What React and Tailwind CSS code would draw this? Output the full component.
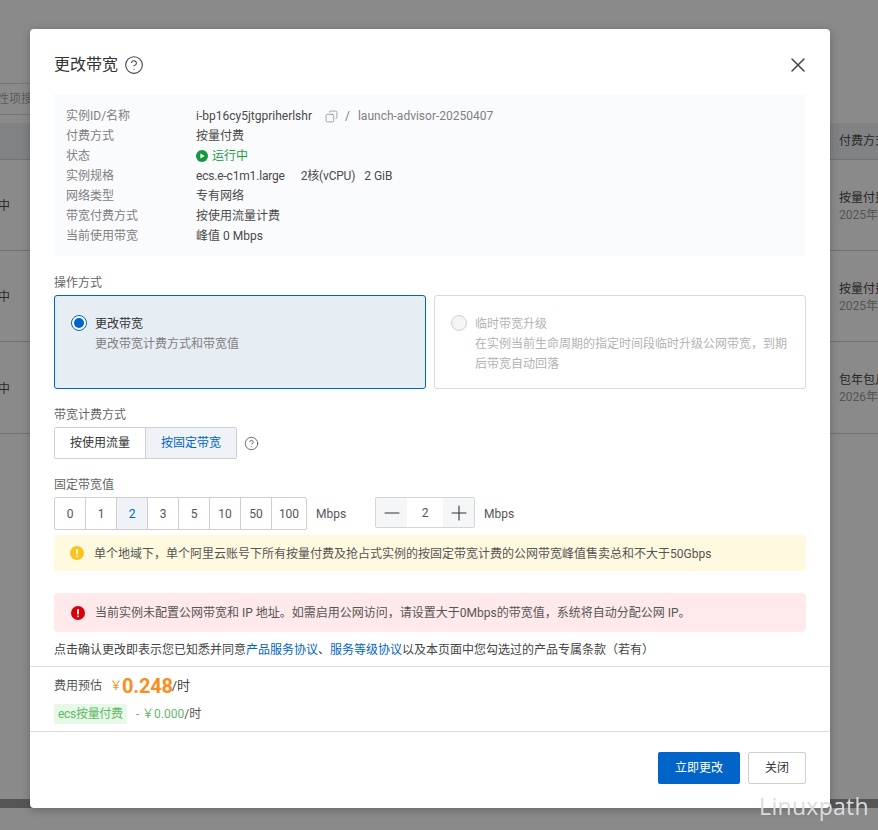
import React from "react";
import { CircleHelp, Copy, X, Minus, Plus } from "lucide-react";

const font = "font-['Roboto','Noto_Sans_CJK_SC',sans-serif]";

function BgRow({ left, right, sub, h }) {
  return (
    <div className={`flex justify-between border-b border-[#727272] ${h}`}>
      <div className="ml-[-2px] flex items-center pt-[2px] text-xs text-[#2a2a2a]">{left}</div>
      <div className="w-[39px] overflow-hidden whitespace-nowrap pt-[30px] text-xs leading-[17px]">
        <div className="text-[#262626]">{right}</div>
        <div className="text-[#555]">{sub}</div>
      </div>
    </div>
  );
}

function Info({ label, children }) {
  return (
    <div className="flex h-5 items-center text-xs">
      <div className="w-[130px] text-[#808080]">{label}</div>
      <div className="flex items-center text-[#4a4a4a]">{children}</div>
    </div>
  );
}

function Alert({ color, h, mt, icon, children, pl }) {
  return (
    <div className={`flex items-center rounded-sm text-xs text-[#555] ${color} ${h} ${mt} ${pl}`}>
      {icon}
      {children}
    </div>
  );
}

export default function App() {
  const vals = ["0", "1", "2", "3", "5", "10", "50", "100"];
  return (
    <div className={`relative h-[830px] w-[878px] overflow-hidden bg-[#8a8a8a] ${font}`}>
      {/* dimmed page behind the dialog */}
      <div className="pt-[83px]">
        <div className="h-[32px] w-[31px] overflow-hidden whitespace-nowrap border-y border-[#757575] text-xs leading-[30px] text-[#5c5c5c]">
          <span className="ml-[-3px]">性项搜</span>
        </div>
        <div className="mt-[8px] flex h-[37px] items-center justify-end border-b border-[#727272] bg-[#808284] text-xs text-[#2a2a2a]">
          <div className="w-[39px] overflow-hidden whitespace-nowrap">付费方式</div>
        </div>
        <BgRow left="中" right="按量付费" sub="2025年" h="h-[91px]" />
        <BgRow left="中" right="按量付费" sub="2025年" h="h-[91px]" />
        <BgRow left="中" right="包年包月" sub="2026年" h="h-[92px]" />
        <div className="mt-[365px] h-[9px] bg-[#555555]" />
      </div>

      {/* dialog */}
      <div className="absolute left-[30px] top-[29px] flex h-[779px] w-[800px] flex-col rounded-[4px] bg-white shadow-[0_2px_8px_rgba(0,0,0,0.25)]">
        <div className="flex h-[65px] items-center justify-between pl-6 pr-6 pt-[7px]">
          <div className="flex items-center">
            <span className="text-base text-[#333]">更改带宽</span>
            <CircleHelp className="ml-[6px] h-5 w-5 text-[#444]" strokeWidth={1.3} />
          </div>
          <X className="mr-[-4px] h-6 w-6 text-[#444]" strokeWidth={1.5} />
        </div>

        <div className="mx-6 h-[162px] bg-[#fafbfd] px-3 pt-3">
          <Info label="实例ID/名称">
            <span>i-bp16cy5jtgpriherlshr</span>
            <Copy className="ml-[13px] h-[13px] w-[13px] scale-x-[-1] text-[#808080]" strokeWidth={1.3} />
            <span className="ml-[7px] text-[#808080]">/</span>
            <span className="ml-[8px] text-[#808080]">launch-advisor-20250407</span>
          </Info>
          <Info label="付费方式">按量付费</Info>
          <Info label="状态">
            <svg viewBox="0 0 12 12" className="mr-[4px] h-3 w-3">
              <circle cx="6" cy="6" r="6" fill="#12973d" />
              <path d="M4.4 3.4 L8.6 6 L4.4 8.6 Z" fill="#fff" />
            </svg>
            <span className="text-[#1f9a4a]">运行中</span>
          </Info>
          <Info label="实例规格">
            <span className="tracking-[-0.18px]">ecs.e-c1m1.large</span>
            <span className="ml-4 tracking-[-0.2px]">2核(vCPU)</span>
            <span className="ml-[9px]">2 GiB</span>
          </Info>
          <Info label="网络类型">专有网络</Info>
          <Info label="带宽付费方式">按使用流量计费</Info>
          <Info label="当前使用带宽">峰值 0 Mbps</Info>
        </div>

        <div className="mx-6 mt-[18px] text-xs leading-[18px] text-[#666]">操作方式</div>
        <div className="mx-6 mt-[3px] flex h-[94px] gap-2">
          <div className="flex w-[372px] rounded-[3px] border border-[#0064c8] bg-[#e6edf3] pl-[16px] pt-[18px]">
            <div className="mt-px flex h-4 w-4 items-center justify-center rounded-full border border-[#0064c8] bg-white">
              <div className="h-[10px] w-[10px] rounded-full bg-[#0064c8]" />
            </div>
            <div className="ml-2 text-xs leading-5">
              <div className="text-[#333]">更改带宽</div>
              <div className="text-[#808080]">更改带宽计费方式和带宽值</div>
            </div>
          </div>
          <div className="flex w-[372px] rounded-[3px] border border-[#d9d9d9] bg-white pl-[16px] pr-[12px] pt-[18px]">
            <div className="mt-px h-4 w-4 shrink-0 rounded-full border border-[#d0d0d0] bg-[#f5f5f5]" />
            <div className="ml-2 text-xs leading-5 text-[#b3b3b3]">
              <div>临时带宽升级</div>
              <div>在实例当前生命周期的指定时间段临时升级公网带宽，到期后带宽自动回落</div>
            </div>
          </div>
        </div>

        <div className="mx-6 mt-[17px] text-xs leading-[18px] text-[#666]">带宽计费方式</div>
        <div className="mx-6 mt-[3px] flex h-[32px] items-center">
          <div className="flex h-full w-[183px] rounded-[2px] border border-[#cfcfcf] text-xs">
            <div className="flex w-[91px] items-center justify-center border-r border-[#cfcfcf] text-[#333]">按使用流量</div>
            <div className="flex flex-1 items-center justify-center bg-[#eff3f8] text-[#0064c8]">按固定带宽</div>
          </div>
          <CircleHelp className="ml-[7px] h-[15px] w-[15px] text-[#666]" strokeWidth={1.5} />
        </div>

        <div className="mx-6 mt-[17px] text-xs leading-[18px] text-[#666]">固定带宽值</div>
        <div className="mx-6 mt-[3px] flex items-start">
          <div className="flex h-[33px] w-[253px] rounded-[2px] border border-[#cfcfcf] text-xs">
            {vals.map((v, i) => (
              <div
                key={v}
                className={`flex items-center justify-center border-[#cfcfcf] pt-px ${i < 7 ? "w-[31px] border-r" : "flex-1"} ${v === "2" ? "bg-[#eff3f8] text-[#0064c8]" : "text-[#555]"}`}
              >
                {v}
              </div>
            ))}
          </div>
          <span className="ml-[9px] w-[59px] text-xs leading-[34px] text-[#555]">Mbps</span>
          <div className="flex h-[31px] w-[100px] items-center rounded-[2px] border border-[#d5d5d5] text-xs text-[#555]">
            <div className="flex h-full w-[31px] items-center justify-center bg-[#f5f6f7]">
              <Minus className="h-6 w-6 text-[#333]" strokeWidth={1.1} />
            </div>
            <div className="flex-1 text-center">2</div>
            <div className="flex h-full w-[31px] items-center justify-center bg-[#f5f6f7]">
              <Plus className="h-6 w-6 text-[#333]" strokeWidth={1.1} />
            </div>
          </div>
          <span className="ml-[9px] text-xs leading-[34px] text-[#555]">Mbps</span>
        </div>

        <Alert
          color="bg-[#fff9e0]"
          h="h-[36px]"
          mt="mx-6 mt-[4px]"
          pl="pl-[16px]"
          icon={
            <svg viewBox="0 0 14 14" className="mr-[10px] h-[14px] w-[14px]">
              <circle cx="7" cy="7" r="7" fill="#fac31e" />
              <rect x="6.2" y="3" width="1.6" height="5.4" rx=".6" fill="#fff" />
              <rect x="6.2" y="9.4" width="1.6" height="1.6" rx=".6" fill="#fff" />
            </svg>
          }
        >
          <span className="pt-px">单个地域下，单个阿里云账号下所有按量付费及抢占式实例的按固定带宽计费的公网带宽峰值售卖总和不大于50Gbps</span>
        </Alert>
        <Alert
          color="bg-[#ffe9ea]"
          h="h-[39px]"
          mt="mx-6 mt-[22px]"
          pl="pl-[17px]"
          icon={
            <svg viewBox="0 0 14 14" className="mr-[10px] h-[14px] w-[14px]">
              <circle cx="7" cy="7" r="7" fill="#d9000b" />
              <rect x="6.1" y="3" width="1.8" height="5.4" rx=".6" fill="#fff" />
              <rect x="6.1" y="9.4" width="1.8" height="1.8" rx=".6" fill="#fff" />
            </svg>
          }
        >
          当前实例未配置公网带宽和 IP 地址。如需启用公网访问，请设置大于0Mbps的带宽值，系统将自动分配公网 IP。
        </Alert>

        <div className="mx-6 mt-[9px] text-xs leading-[18px] text-[#444]">
          点击确认更改即表示您已知悉并同意<span className="text-[#0064c8]">产品服务协议</span>、<span className="text-[#0064c8]">服务等级协议</span>以及本页面中您勾选过的产品专属条款（若有）
        </div>

        <div className="mt-[7px] h-[66px] border-y border-[#dcdcdc] px-6">
          <div className="flex h-[38px] items-center text-xs">
            <span className="text-[#555]">费用预估</span>
            <span className="ml-[8px] text-[#f98e1e]">￥</span>
            <span className="text-xl font-bold tracking-[-0.2px] text-[#f98e1e]">0.248</span>
            <span className="ml-[-1px] text-[13px] text-[#444]">/时</span>
          </div>
          <div className="mt-[-1px] flex items-center text-xs">
            <span className="rounded-[2px] bg-[#e8f8e7] px-1 leading-5 tracking-[-0.3px] text-[#5fb96a]">ecs按量付费</span>
            <span className="ml-[9px] text-[#5fb96a]">- ￥0.000</span>
            <span className="text-xs text-[#555]">/时</span>
          </div>
        </div>

        <div className="mr-6 mt-[20px] flex justify-end gap-2 text-xs">
          <div className="flex h-[32px] w-[82px] items-center justify-center rounded-[2px] bg-[#0064c8] text-white">立即更改</div>
          <div className="flex h-[32px] w-[58px] items-center justify-center rounded-[2px] border border-[#cfcfcf] text-[#333]">关闭</div>
        </div>
      </div>

      {/* watermark */}
      <div className="absolute right-[9px] top-[790px] font-['Open_Sans',sans-serif] text-[23px] leading-8 tracking-[0.3px] text-[#dcdcdc]">
        Linuxpath
      </div>
    </div>
  );
}
